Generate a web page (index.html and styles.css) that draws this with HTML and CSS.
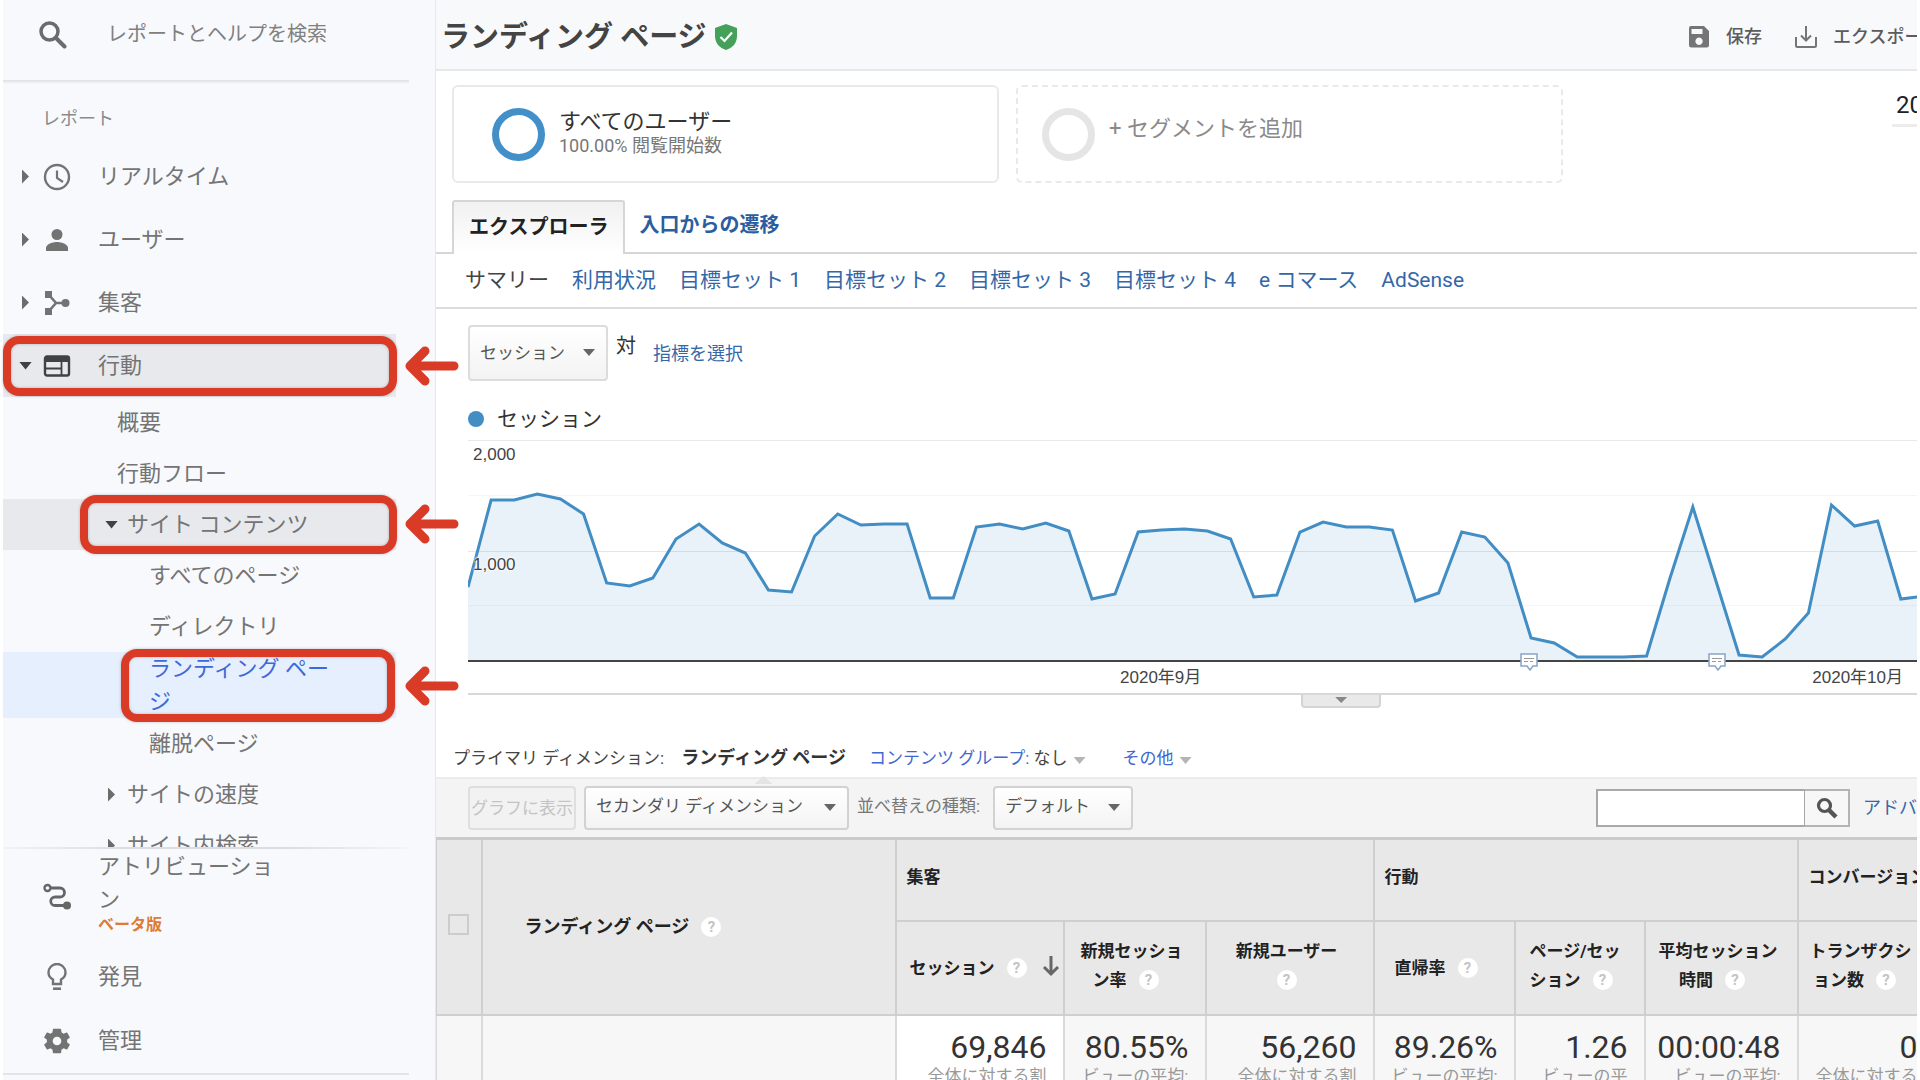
FILE: index.html
```html
<!DOCTYPE html>
<html lang="ja">
<head>
<meta charset="utf-8">
<title>ランディング ページ</title>
<link rel="stylesheet" href="styles.css">
</head>
<body>
<div class="app">
  <aside class="sidebar">
    <div class="side-search">
      <svg class="icon-search" viewBox="0 0 28 28" aria-hidden="true"><circle cx="10.500" cy="10.500" r="8.500" fill="none" stroke="#6b6b6b" stroke-width="3.500"/><path d="M17 17l8.500 8.500" stroke="#6b6b6b" stroke-width="4" stroke-linecap="round"/></svg>
      <input type="text" class="side-input" aria-label="レポートとヘルプを検索" placeholder="レポートとヘルプを検索">
    </div>
    <div class="side-line"></div>
    <nav class="side-nav">
      <h2 class="side-heading">レポート</h2>
      <a href="#" class="item"><span class="caret"></span>
        <svg class="ico" viewBox="0 0 28 28"><circle cx="14" cy="14" r="12" fill="none" stroke="#737373" stroke-width="2.400"/><path d="M14 7.500V15l6 4" fill="none" stroke="#737373" stroke-width="2.200"/></svg>リアルタイム</a>
      <a href="#" class="item"><span class="caret"></span>
        <svg class="ico" viewBox="0 0 28 28"><circle cx="14" cy="8.500" r="5.500" fill="#737373"/><path d="M3 25v-3c0-4 7-6 11-6s11 2 11 6v3z" fill="#737373"/></svg>ユーザー</a>
      <a href="#" class="item"><span class="caret"></span>
        <svg class="ico" viewBox="0 0 28 28"><path d="M2 2h7v7H2zM2 19h7v7H2z" fill="#737373"/><circle cx="22.500" cy="14" r="4" fill="#737373"/><path d="M6 6l7 8-7 8M13 14h9" fill="none" stroke="#737373" stroke-width="2.600"/></svg>集客</a>
      <a href="#" class="item item-open"><span class="caret caret-down"></span>
        <svg class="ico" viewBox="0 0 28 28"><rect x="2" y="4.500" width="24" height="19" rx="2" fill="none" stroke="#3f4145" stroke-width="2.400"/><path d="M2 4.500h24v5.500H2z" fill="#3f4145"/><path d="M2 16.500h16M18.500 10v13" stroke="#3f4145" stroke-width="1.800"/></svg>行動</a>
      <a href="#" class="sub">概要</a>
      <a href="#" class="sub">行動フロー</a>
      <a href="#" class="sub sub-group sub-open"><span class="caret caret-down"></span>サイト コンテンツ</a>
      <a href="#" class="sub leaf">すべてのページ</a>
      <a href="#" class="sub leaf">ディレクトリ</a>
      <a href="#" class="sub leaf leaf-current"><span class="wrap-label">ランディング ページ</span></a>
      <a href="#" class="sub leaf">離脱ページ</a>
      <a href="#" class="sub sub-group"><span class="caret"></span>サイトの速度</a>
      <a href="#" class="sub sub-group"><span class="caret"></span>サイト内検索</a>
    </nav>
    <div class="side-bottom">
      <div class="side-split"></div>
      <a href="#" class="item item-attr">
        <svg class="ico" viewBox="0 0 28 28"><circle cx="4.500" cy="5" r="3" fill="none" stroke="#666" stroke-width="2.400"/><path d="M7.500 5H17a4.500 4.500 0 0 1 0 9h-5a4 4 0 0 0 0 8.500h11" fill="none" stroke="#666" stroke-width="2.800"/><circle cx="24" cy="22.500" r="4" fill="#666"/></svg>
        <span class="wrap-label">アトリビューション<span class="beta">ベータ版</span></span></a>
      <a href="#" class="item">
        <svg class="ico" viewBox="0 0 28 28"><path d="M10 21v-4.500C7 15 5.500 12.500 5.500 9.500a8.500 8.500 0 0 1 17 0c0 3-1.500 5.500-4.500 7V21z" fill="none" stroke="#737373" stroke-width="2.400"/><path d="M10 25.700h8" stroke="#737373" stroke-width="2.600"/></svg>発見</a>
      <a href="#" class="item">
        <svg class="ico" viewBox="0 0 24 24"><path fill="#737373" d="M20.600 13c0-.3.100-.6.100-1s0-.7-.1-1l2.200-1.700c.2-.2.300-.4.100-.7l-2.100-3.600c-.1-.2-.4-.3-.6-.2l-2.600 1c-.5-.4-1.100-.7-1.700-1L15.500 2c0-.2-.2-.4-.5-.4H9c-.3 0-.5.200-.5.400l-.4 2.800c-.6.200-1.200.6-1.700 1l-2.600-1c-.2-.1-.5 0-.6.200L1.100 8.600c-.1.200-.1.500.1.700L3.400 11c0 .3-.1.700-.1 1s0 .7.100 1l-2.200 1.700c-.2.200-.2.400-.1.700L3.200 19c.1.200.4.300.6.200l2.600-1c.5.400 1.100.7 1.700 1l.4 2.800c0 .2.200.4.500.4h6c.3 0 .5-.2.500-.4l.4-2.800c.6-.2 1.200-.6 1.700-1l2.600 1c.2.100.5 0 .6-.2l2.100-3.600c.1-.2.1-.5-.1-.7zM12 15.700a3.700 3.700 0 1 1 0-7.400 3.700 3.700 0 0 1 0 7.400z"/></svg>管理</a>
      <div class="side-end"></div>
    </div>
  </aside>

  <main class="main">
    <header class="head">
      <h1 class="title">ランディング ページ</h1>
      <svg class="shield" viewBox="0 0 24 28"><path d="M12 1l11 4v8c0 7-4.500 12-11 14C5.500 25 1 20 1 13V5z" fill="#45a05a"/><path d="M6.500 14l4 4 7.500-8.500" fill="none" stroke="#fff" stroke-width="2.200"/></svg>
      <div class="actions">
        <button class="action"><svg viewBox="0 0 24 24"><path fill="#757575" fill-rule="evenodd" d="M4 1h13l5 5v14a2.500 2.500 0 0 1-2.500 2.500h-15A2.500 2.500 0 0 1 2 20V3a2 2 0 0 1 2-2zM4.500 4v5h11V4zM12 12.500a3.700 3.700 0 1 0 .1 0z"/></svg>保存</button>
        <button class="action"><svg viewBox="0 0 24 24"><path fill="none" stroke="#757575" stroke-width="2" d="M12 1v14M7 10.500l5 5 5-5M2 12v8.500q0 1.500 1.500 1.500h17q1.500 0 1.500-1.500V12"/></svg>エクスポート</button>
      </div>
    </header>

    <section class="segments">
      <div class="seg">
        <span class="ring"></span>
        <div><div class="seg-name">すべてのユーザー</div><div class="seg-sub">100.00% 閲覧開始数</div></div>
      </div>
      <button class="seg seg-add"><span class="ring ring-grey"></span><span class="seg-add-label">+ セグメントを追加</span></button>
      <div class="date">2020/09/01</div>
    </section>

    <div class="tabs">
      <a href="#" class="tab tab-on">エクスプローラ</a>
      <a href="#" class="tab">入口からの遷移</a>
    </div>
    <div class="subtabs">
      <span class="subtab-on">サマリー</span>
      <a href="#">利用状況</a>
      <a href="#">目標セット 1</a>
      <a href="#">目標セット 2</a>
      <a href="#">目標セット 3</a>
      <a href="#">目標セット 4</a>
      <a href="#">e コマース</a>
      <a href="#">AdSense</a>
    </div>

    <section class="explorer">
      <div class="metric-row">
        <span class="pick pick-metric"><select aria-label="指標"><option>セッション</option></select></span>
        <span class="versus">対</span>
        <a href="#" class="metric-link">指標を選択</a>
      </div>
      <div class="legend"><span class="dot"></span>セッション</div>
      <div class="chart">
        <svg class="plot" viewBox="0 0 62.7 222" preserveAspectRatio="none">
          <g fill="none">
            <path d="M0 0.500H62.700" stroke="#e9e9e9" vector-effect="non-scaling-stroke"/>
            <path d="M0 55.500H62.700M0 165.500H62.700" stroke="#f5f5f5" vector-effect="non-scaling-stroke"/>
            <path d="M0 111.500H62.700" stroke="#e6e6e6" vector-effect="non-scaling-stroke"/>
          </g>
          <path fill="#3f86c4" fill-opacity=".11" d="M0 147L1 60 2 60 3 54 4 59 5 74 6 143 7 146 8 138 9 99 10 84 11 103 12 113 13 150 14 152 15 96 16 74 17 85 18 84 19 84 20 158 21 158 22 87 23 84 24 89 25 83 26 91 27 159 28 154 29 92 30 90 31 89 32 91 33 99 34 157 35 155 36 92 37 82 38 87 39 87 40 90 41 161 42 153 43 92 44 97 45 123 46 198 47 203 48 217 49 217 50 217 51 216 52 139 53 67 54 141 55 215 56 217 57 199 58 173 59 65 60 86 61 81 62 159 63 156V221H0z"/>
          <path fill="none" stroke="#428dc4" stroke-width="3" vector-effect="non-scaling-stroke" d="M0 147L1 60 2 60 3 54 4 59 5 74 6 143 7 146 8 138 9 99 10 84 11 103 12 113 13 150 14 152 15 96 16 74 17 85 18 84 19 84 20 158 21 158 22 87 23 84 24 89 25 83 26 91 27 159 28 154 29 92 30 90 31 89 32 91 33 99 34 157 35 155 36 92 37 82 38 87 39 87 40 90 41 161 42 153 43 92 44 97 45 123 46 198 47 203 48 217 49 217 50 217 51 216 52 139 53 67 54 141 55 215 56 217 57 199 58 173 59 65 60 86 61 81 62 159 63 156"/>
          <path d="M0 221H62.700" stroke="#444" stroke-width="2" vector-effect="non-scaling-stroke"/>
        </svg>
        <span class="tick tick-high">2,000</span>
        <span class="tick tick-mid">1,000</span>
        <span class="month month-sep">2020年9月</span>
        <span class="month month-oct">2020年10月</span>
        <svg class="note note-a" viewBox="0 0 20 18"><path d="M2 1h16v12h-4l-3 4-3-4H2z" fill="#fff" stroke="#8ba4c6" stroke-width="1.500"/><path d="M5 5.500h10M5 8.500h4M11 8.500h3" stroke="#999"/></svg>
        <svg class="note note-b" viewBox="0 0 20 18"><path d="M2 1h16v12h-4l-3 4-3-4H2z" fill="#fff" stroke="#8ba4c6" stroke-width="1.500"/><path d="M5 5.500h10M5 8.500h4M11 8.500h3" stroke="#999"/></svg>
      </div>
      <div class="drawer"><button class="handle" aria-label="開く"></button></div>
    </section>

    <div class="dims">
      <span>プライマリ ディメンション:</span>
      <span class="dim-on">ランディング ページ</span>
      <span class="dim-group"><a href="#">コンテンツ グループ:</a> なし<i class="tri"></i></span>
      <span><a href="#">その他</a><i class="tri"></i></span>
    </div>

    <div class="toolbar">
      <button class="plot-rows" disabled>グラフに表示</button>
      <span class="pick pick-second"><select aria-label="セカンダリ ディメンション"><option>セカンダリ ディメンション</option></select></span>
      <label class="sort-label" for="sort">並べ替えの種類:</label>
      <span class="pick pick-sort"><select id="sort"><option>デフォルト</option></select></span>
      <div class="finder">
        <input type="text" class="find" aria-label="検索">
        <button class="find-go" aria-label="検索"><svg viewBox="0 0 22 22"><circle cx="8.500" cy="8.500" r="6" fill="none" stroke="#555" stroke-width="3.200"/><path d="M13 13l7 7" stroke="#555" stroke-width="4.500"/></svg></button>
        <a href="#" class="advanced">アドバンス</a>
      </div>
    </div>

    <div class="table-box">
      <table class="data">
        <colgroup><col class="c-check"><col class="c-page"><col class="c-sess"><col class="c-rate"><col class="c-new"><col class="c-bounce"><col class="c-pps"><col class="c-time"><col class="c-trans"></colgroup>
        <thead>
          <tr class="groups">
            <th rowspan="2"><input type="checkbox" class="check" aria-label="すべて選択"></th>
            <th rowspan="2" class="th-page">ランディング ページ<span class="help">?</span></th>
            <th colspan="3" class="group">集客</th>
            <th colspan="3" class="group">行動</th>
            <th class="group">コンバージョン</th>
          </tr>
          <tr class="metrics">
            <th class="th-sess">セッション<span class="help">?</span><svg class="sort-arrow" viewBox="0 0 18 22"><path d="M9 1v18M2 12l7 7 7-7" fill="none" stroke="#666" stroke-width="3"/></svg></th>
            <th>新規セッショ<br>ン率<span class="help">?</span></th>
            <th>新規ユーザー<br><span class="help help-alone">?</span></th>
            <th class="th-bounce">直帰率<span class="help">?</span></th>
            <th class="th-left">ページ/セッ<br>ション<span class="help">?</span></th>
            <th>平均セッション<br>時間<span class="help">?</span></th>
            <th class="th-trans">トランザクシ<br>ョン数<span class="help">?</span></th>
          </tr>
        </thead>
        <tbody>
          <tr>
            <td></td><td></td>
            <td class="sorted"><b>69,846</b>全体に対する割</td>
            <td><b>80.55%</b>ビューの平均:</td>
            <td><b>56,260</b>全体に対する割</td>
            <td><b>89.26%</b>ビューの平均:</td>
            <td><b>1.26</b>ビューの平</td>
            <td><b>00:00:48</b>ビューの平均:</td>
            <td><b>0</b>全体に対する</td>
          </tr>
        </tbody>
      </table>
    </div>
  </main>
</div>

<div class="mark mark-behavior"></div>
<div class="mark mark-content"></div>
<div class="mark mark-landing"></div>
<svg class="arrow arrow-behavior" viewBox="0 0 58 44"><path d="M51 22H8M22 7L7 22l15 15" /></svg>
<svg class="arrow arrow-content" viewBox="0 0 58 44"><path d="M51 22H8M22 7L7 22l15 15" /></svg>
<svg class="arrow arrow-landing" viewBox="0 0 58 44"><path d="M51 22H8M22 7L7 22l15 15" /></svg>
</body>
</html>
```
FILE: styles.css
```css
* { box-sizing: border-box; }
body {
  margin: 0;
  height: 100vh;
  overflow: hidden;
  background: #fff;
  color: #333;
  font: 18px/24px Roboto, "Noto Sans CJK JP", sans-serif;
}
a { color: #3467a8; text-decoration: none; }
button, input, select { font: inherit; color: inherit; margin: 0; padding: 0; }
button { cursor: pointer; }

.app {
  display: grid;
  grid-template-columns: 433px minmax(0, 1fr);
  height: 100vh;
  margin: 0 3px;
  overflow: hidden;
}

/* Sidebar */
.sidebar {
  display: flex;
  flex-direction: column;
  height: 100vh;
  background: #f8f9fc;
  border-right: 1px solid #e6e8ec;
  color: #747474;
  font-size: 22px;
}
.side-search { display: flex; align-items: center; flex: none; height: 80px; padding: 0 24px 10px 36px; }
.icon-search { width: 28px; height: 28px; margin-right: 40px; flex: none; }
.side-input { flex: 1; min-width: 0; border: 0; background: none; outline: 0; font-size: 20px; height: 32px; padding-bottom: 2px; }
.side-input::placeholder { color: #808080; opacity: 1; }
.side-line { flex: none; height: 4px; margin-right: 26px; background: linear-gradient(#dedfe2, #f8f9fc); }
.side-nav { flex: 1; min-height: 0; overflow: hidden; }
.side-heading { margin: 23px 0 14px 39px; font-size: 18px; line-height: 24px; font-weight: 400; color: #8a8a8a; }
.item { display: flex; align-items: center; height: 63px; margin-right: 39px; padding-left: 40px; color: #747474; white-space: nowrap; }
.item .ico { width: 28px; height: 28px; flex: none; margin-right: 27px; }
.item .caret { margin-left: -21px; margin-right: 14px; }
.item .caret-down { margin-left: -24px; margin-right: 11px; }
.caret { width: 7px; height: 14px; flex: none; background: #6c6c6c; clip-path: polygon(0 0, 100% 50%, 0 100%); }
.caret-down { width: 13px; height: 8px; background: #3f4145; clip-path: polygon(0 0, 100% 0, 50% 100%); }
.item-open, .sub-open { background: #e8e9ed; }
.sub { display: flex; align-items: center; height: 51px; margin-right: 39px; padding-left: 114px; color: #747474; white-space: nowrap; }
.sub-group { padding-left: 101px; }
.sub-group .caret { margin: 0 12px 0 4px; }
.sub-group .caret-down { margin: 0 9px 0 1px; }
.leaf { padding-left: 146px; }
.leaf-current { height: 66px; background: #e6effd; color: #3f68d8; }
.wrap-label { width: 190px; white-space: normal; line-height: 33px; }
.side-bottom { flex: none; padding-bottom: 5px; }
.side-split { height: 2px; margin-right: 26px; background: linear-gradient(90deg, #f1f2f5, #dcdde0 30%, #dcdde0 70%, #f4f5f8); }
.side-bottom .item { height: 64px; }
.side-bottom .item-attr { height: 96px; }
.beta { display: block; font-size: 16px; line-height: 18px; font-weight: 700; color: #dd7b36; margin-bottom: 10px; }
.side-end { height: 2px; margin-right: 26px; background: #e3e4e8; }

/* Header */
.main { min-width: 0; overflow: hidden; }
.head { display: flex; align-items: center; height: 71px; padding: 5px 0 0 5px; background: #f8f9fb; border-bottom: 2px solid #e8e8ea; }
.title { margin: 0; font-size: 29px; line-height: 40px; font-weight: 700; color: #444; }
.shield { width: 24px; height: 28px; margin-left: 7px; }
.actions { display: flex; gap: 32px; width: 230px; margin-left: auto; overflow: hidden; }
.action { display: flex; align-items: center; gap: 15px; flex: none; border: 0; background: none; font-size: 18px; font-weight: 500; color: #5c5c5c; }
.action svg { width: 24px; height: 24px; }

/* Segments */
.segments { display: flex; height: 129px; padding: 14px 0 17px 16px; }
.seg { display: flex; align-items: center; width: 547px; height: 98px; padding-left: 38px; border: 2px solid #e9e9e9; border-radius: 6px; background: none; text-align: left; }
.ring { width: 53px; height: 53px; border: 7px solid #438fc8; border-radius: 50%; margin-right: 14px; flex: none; }
.ring-grey { border-color: #e5e5e5; }
.seg-name { font-size: 22px; line-height: 24px; color: #333; }
.seg-sub { font-size: 18px; line-height: 24px; color: #777; }
.seg-add { margin-left: 17px; padding-left: 24px; border-style: dashed; border-width: 2px; }
.seg-add-label { padding-bottom: 10px; font-size: 22px; color: #8a8a8a; }
.date { width: 25px; height: 42px; margin-left: auto; padding: 8px 0 0 4px; border-bottom: 3px solid #ececec; overflow: hidden; font-size: 24px; line-height: 24px; color: #222; }

/* Tabs */
.tabs { display: flex; height: 54px; padding-left: 16px; border-bottom: 2px solid #d6d6d6; }
.tab { height: 53px; padding: 0 14px; font-size: 20px; line-height: 50px; font-weight: 700; color: #2b5d9f; }
.tab-on { height: 54px; padding: 0 15px; border: 2px solid #d6d6d6; border-bottom: 0; border-radius: 3px 3px 0 0; background: linear-gradient(#f1f1f1, #fff); color: #222; }
.subtabs { display: flex; gap: 23px; height: 55px; padding-left: 29px; border-bottom: 2px solid #dcdcdc; font-size: 21px; line-height: 52px; white-space: nowrap; }
.subtab-on { color: #444; }

/* Explorer */
.explorer { padding-left: 32px; }
.metric-row { display: flex; height: 72px; padding-top: 16px; }
.pick { position: relative; display: block; border: 2px solid #dcdcdc; border-radius: 4px; background: linear-gradient(#fff, #f3f3f3); }
.pick::after { content: ""; position: absolute; right: 11px; top: 50%; width: 12px; height: 7px; margin-top: -4px; background: #666; clip-path: polygon(0 0, 100% 0, 50% 100%); pointer-events: none; }
.pick select { appearance: none; width: 100%; height: 100%; border: 0; outline: 0; background: none; padding-left: 10px; font-size: 17px; color: #555; }
.pick-metric { width: 140px; height: 56px; }
.versus { margin: 9px 0 0 8px; font-size: 20px; }
.metric-link { margin: 17px 0 0 17px; font-size: 18px; }
.legend { display: flex; align-items: center; gap: 13px; height: 59px; padding-top: 17px; font-size: 21px; }
.dot { width: 16px; height: 16px; border-radius: 50%; background: #428dc4; }
.chart { position: relative; height: 255px; border-bottom: 2px solid #d8d8d8; }
.plot { display: block; width: 100%; height: 222px; }
.tick, .month { position: absolute; font: 17px/20px "Liberation Sans", "Noto Sans CJK JP", sans-serif; color: #444; white-space: nowrap; }
.tick { left: 5px; text-shadow: 0 0 3px #fff, 0 0 3px #fff, 0 0 2px #fff; }
.tick-high { top: 5px; }
.tick-mid { top: 115px; }
.month { top: 228px; }
.month-sep { left: 45%; }
.month-oct { right: 14px; }
.note { position: absolute; top: 213px; width: 20px; height: 18px; }
.note-a { left: 72.5%; }
.note-b { left: 85.5%; }
.drawer { display: flex; }
.handle { width: 80px; height: 14px; margin-left: 57.5%; margin-top: -1px; border: 2px solid #d4d4d4; border-top: 0; border-radius: 0 0 4px 4px; background: #e9e9e9; display: flex; justify-content: center; }
.handle::after { content: ""; width: 12px; height: 6px; margin-top: 3px; background: #888; clip-path: polygon(0 0, 100% 0, 50% 100%); }

/* Dimensions and table controls */
.dims { display: flex; height: 69px; padding: 38px 0 0 17px; gap: 17px; font-size: 17px; line-height: 24px; white-space: nowrap; color: #444; }
.dims a { color: #4067cf; }
.dim-on { position: relative; font-weight: 700; font-size: 18px; color: #333; }
.dim-on::after { content: ""; position: absolute; left: 50%; bottom: -7px; width: 18px; height: 8px; margin-left: -9px; background: #e4e4e4; clip-path: polygon(50% 0, 100% 100%, 0 100%); }
.dim-group { margin: 0 20px 0 6px; }
.tri { display: inline-block; width: 12px; height: 7px; margin-left: 6px; background: #b5b5b5; clip-path: polygon(0 0, 100% 0, 50% 100%); }
.toolbar { display: flex; align-items: flex-start; height: 60px; padding: 7px 0 0 32px; border-top: 2px solid #ebebeb; background: #f4f4f4; font-size: 17px; white-space: nowrap; }
.plot-rows { width: 108px; height: 44px; border: 2px solid #dfdfdf; border-radius: 4px; background: #f2f2f2; color: #c4c4c4; }
.toolbar .pick { height: 44px; border-color: #d2d2d2; }
.toolbar .pick select { padding-bottom: 4px; }
.pick-second { width: 265px; margin-left: 8px; }
.pick-sort { width: 140px; }
.sort-label { margin: 8px 13px 0 8px; color: #777; }
.finder { display: flex; width: 321px; margin: 3px 0 0 auto; overflow: hidden; }
.find { width: 209px; height: 38px; border: 2px solid #a9a9a9; border-right-width: 1px; background: #fff; outline: 0; flex: none; }
.find-go { display: flex; align-items: center; justify-content: center; flex: none; width: 45px; height: 38px; border: 2px solid #b4b4b4; border-left: 0; background: #f7f7f7; }
.find-go svg { width: 22px; height: 22px; }
.advanced { margin: 7px 0 0 13px; font-size: 18px; }

/* Data table */
.table-box { overflow: hidden; }
.data { width: 1498px; table-layout: fixed; border-collapse: collapse; border-top: 3px solid #cacaca; }
.c-check { width: 45px; }
.c-page { width: 414px; }
.c-sess { width: 168px; }
.c-rate { width: 142px; }
.c-new { width: 168px; }
.c-bounce { width: 141px; }
.c-pps { width: 130px; }
.c-time { width: 153px; }
.c-trans { width: 137px; }
.data th { padding: 0 10px 4px 4px; border: 2px solid #cfcfcf; border-left-width: 1px; background: #e8e8e8; font-size: 17px; line-height: 29px; font-weight: 700; color: #222; white-space: nowrap; }
.data th:first-child { padding-right: 4px; }
.groups { height: 82px; }
.metrics { height: 94px; }
.data .group { padding-left: 10px; text-align: left; }
.data .th-page { padding: 0 0 0 42px; text-align: left; font-size: 18px; }
.data .metrics .th-sess { padding: 2px 0 0 13px; text-align: left; }
.data .th-bounce { padding: 2px 0 0 20px; text-align: left; }
.data .th-left { padding-left: 14px; text-align: left; }
.data .th-trans { padding-right: 15px; }
.help { display: inline-block; width: 20px; height: 20px; margin: 0 12px; border-radius: 50%; background: #fff; color: #c4c4c4; font-size: 15px; line-height: 20px; font-weight: 700; text-align: center; vertical-align: 1px; }
.help-alone { margin: 0; }
.sort-arrow { width: 18px; height: 22px; margin-left: 3px; vertical-align: -3px; }
.check { appearance: none; display: block; width: 21px; height: 21px; margin: 0 auto; border: 2px solid #ccc; }
.data td { height: 90px; padding: 14px 16px 0 0; border: 2px solid #dadada; border-top: 0; border-left-width: 1px; background: #f7f7f7; vertical-align: top; text-align: right; font-size: 17px; line-height: 24px; color: #999; white-space: nowrap; }
.data .sorted { background: #fff; }
.data b { display: block; font-size: 32px; line-height: 34px; font-weight: 400; color: #333; }

/* Call-out frames and arrows laid over the page */
.mark { position: absolute; border: 8px solid #d93b27; border-radius: 16px; box-shadow: 0 0 3px rgba(0, 0, 0, .25), inset 0 0 3px rgba(0, 0, 0, .25); pointer-events: none; }
.mark-behavior { left: 3px; top: 336px; width: 394px; height: 60px; }
.mark-content { left: 80px; top: 495px; width: 317px; height: 59px; }
.mark-landing { left: 121px; top: 649px; width: 274px; height: 73px; }
.arrow { position: absolute; left: 403px; width: 58px; height: 44px; fill: none; stroke: #d93b27; stroke-width: 9; stroke-linecap: round; stroke-linejoin: round; }
.arrow-behavior { top: 344px; }
.arrow-content { top: 502px; }
.arrow-landing { top: 664px; }
```
